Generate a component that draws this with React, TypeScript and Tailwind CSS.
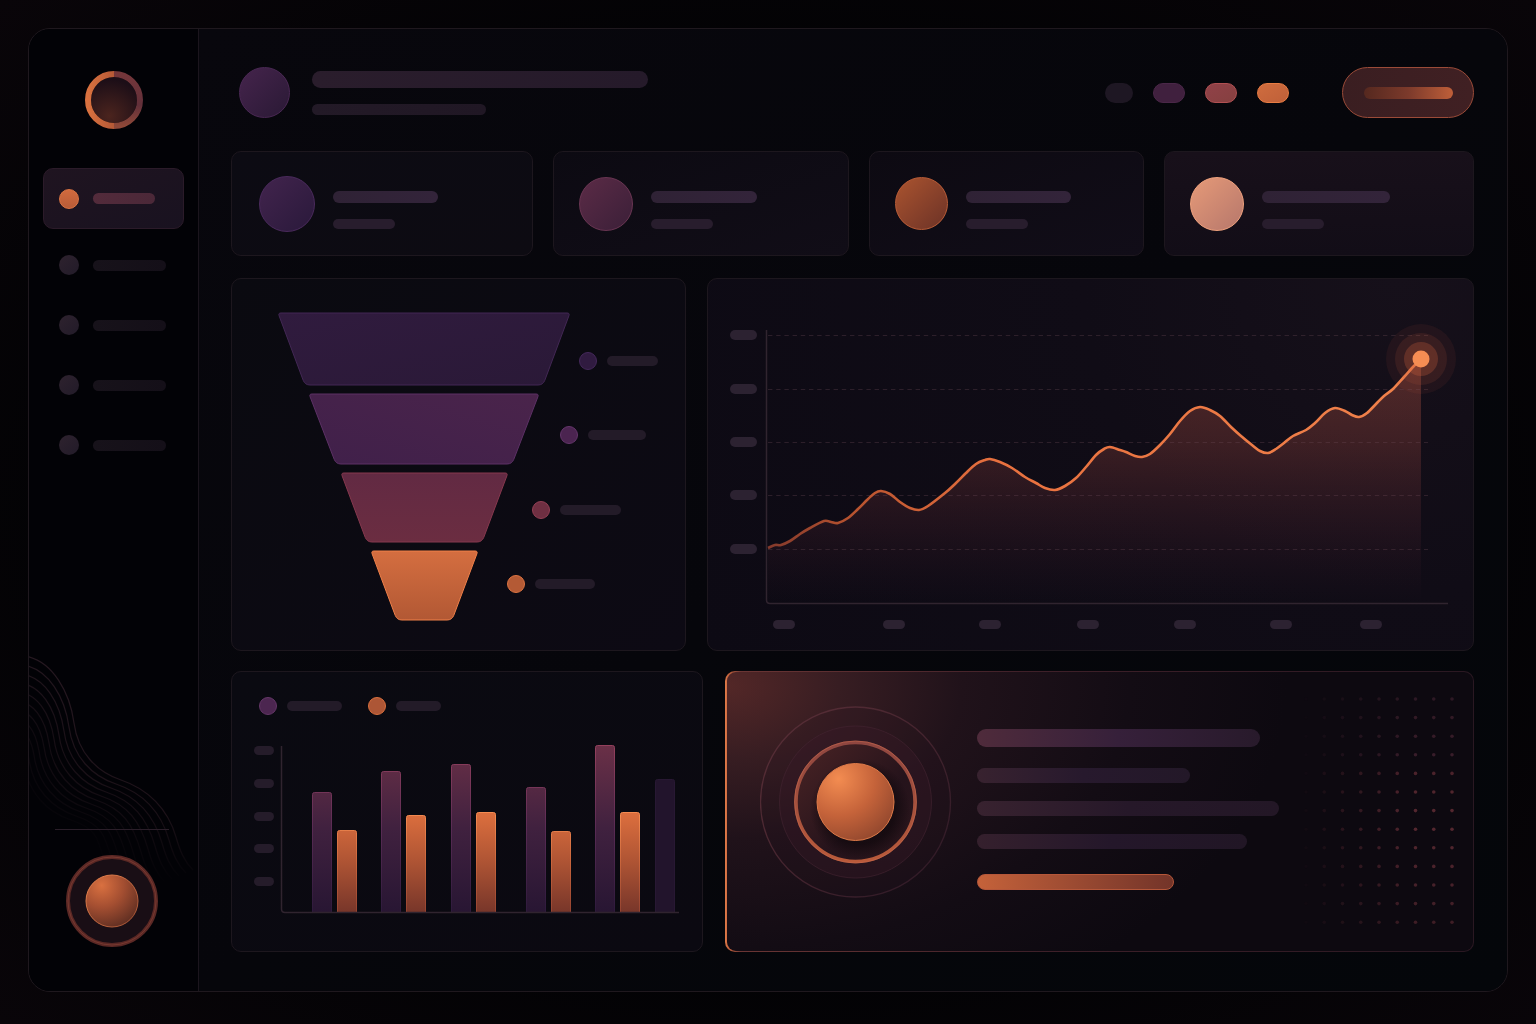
import React from "react";

type Point = [number, number];

/* ---------- helpers ---------- */

function smoothPath(points: Point[]): string {
  let d = `M${points[0][0]} ${points[0][1]}`;
  for (let i = 0; i < points.length - 1; i++) {
    const p0 = points[i - 1] ?? points[i];
    const p1 = points[i];
    const p2 = points[i + 1];
    const p3 = points[i + 2] ?? p2;
    const c1 = [p1[0] + (p2[0] - p0[0]) / 6, p1[1] + (p2[1] - p0[1]) / 6];
    const c2 = [p2[0] - (p3[0] - p1[0]) / 6, p2[1] - (p3[1] - p1[1]) / 6];
    d += ` C${c1[0].toFixed(1)} ${c1[1].toFixed(1)} ${c2[0].toFixed(1)} ${c2[1].toFixed(1)} ${p2[0]} ${p2[1]}`;
  }
  return d;
}

function roundedPolygon(points: Point[], radii: number[]): string {
  const n = points.length;
  const toward = (a: Point, b: Point, r: number): Point => {
    const len = Math.hypot(b[0] - a[0], b[1] - a[1]);
    return [a[0] + ((b[0] - a[0]) * r) / len, a[1] + ((b[1] - a[1]) * r) / len];
  };
  let d = "";
  for (let i = 0; i < n; i++) {
    const p = points[i];
    const a = toward(p, points[(i + n - 1) % n], radii[i]);
    const b = toward(p, points[(i + 1) % n], radii[i]);
    d += `${i ? "L" : "M"}${a[0].toFixed(1)} ${a[1].toFixed(1)} Q${p[0]} ${p[1]} ${b[0].toFixed(1)} ${b[1].toFixed(1)} `;
  }
  return d + "Z";
}

/* ---------- sidebar ---------- */

function Logo() {
  return (
    <svg className="size-[58px]" viewBox="0 0 58 58" role="img" aria-label="Logo">
      <defs>
        <radialGradient id="logoCore" cx="0.4" cy="0.85" r="0.8">
          <stop offset="0" stopColor="#4b241e" />
          <stop offset="1" stopColor="#1c0e17" />
        </radialGradient>
        <linearGradient id="logoLeft" x1="0" y1="0" x2="1" y2="0">
          <stop offset="0" stopColor="#d9713f" />
          <stop offset="1" stopColor="#b55936" />
        </linearGradient>
        <linearGradient id="logoRight" x1="0" y1="0" x2="0" y2="1">
          <stop offset="0" stopColor="#74363a" />
          <stop offset="0.6" stopColor="#62303a" />
          <stop offset="1" stopColor="#8e4838" />
        </linearGradient>
      </defs>
      <circle cx="29" cy="29" r="23" fill="url(#logoCore)" />
      <path d="M29 3a26 26 0 0 1 0 52" fill="none" stroke="url(#logoRight)" strokeWidth="6" />
      <path d="M29 3a26 26 0 0 0 0 52" fill="none" stroke="url(#logoLeft)" strokeWidth="6" />
    </svg>
  );
}

function NavItem({ active = false, label }: { active?: boolean; label: string }) {
  return (
    <button
      type="button"
      aria-label={label}
      aria-current={active ? "page" : undefined}
      className={
        active
          ? "mb-1.5 flex h-[61px] w-full items-center gap-3.5 rounded-[10px] border border-[#2b1b29] bg-linear-to-br from-[#1f1420] to-[#191220] pl-[15px]"
          : "flex h-[60px] w-full items-center gap-3.5 rounded-[10px] border border-transparent pl-[15px]"
      }
    >
      <span
        className={
          active
            ? "size-5 rounded-full border border-[#dc7442] bg-linear-to-b from-[#d16a3e] to-[#b95c38]"
            : "size-5 rounded-full bg-linear-to-br from-[#2e222e] to-[#221b29]"
        }
      />
      <span
        className={
          active
            ? "h-[11px] w-[62px] rounded-full bg-linear-to-r from-[#532b3b] to-[#4b2838]"
            : "h-[11px] w-[73px] rounded-full bg-linear-to-r from-[#17121a] to-[#140f18]"
        }
      />
    </button>
  );
}

/* Each contour is a chain of four curves whose joints share a tangent. */
const waves = Array.from({ length: 11 }, (_, i) => {
  const a: Point = [45 - i * 5, 72 + i * 4];
  const b: Point = [92 - i * 5, 129 + i * 4];
  const c: Point = [147 - i * 7, 186 + i * 3];
  return [
    `M${-4 - i * 2} ${5 + i * 9}`,
    `C${24 - i * 4} ${10 + i * 8} ${41 - i * 5} ${42 + i * 5} ${a[0]} ${a[1]}`,
    `C${a[0] + 4} ${a[1] + 30} ${b[0] - 24} ${b[1] - 8} ${b[0]} ${b[1]}`,
    `C${b[0] + 27} ${b[1] + 9} ${c[0] - 8} ${c[1] - 28} ${c[0]} ${c[1]}`,
    `C${c[0] + 4} ${c[1] + 14} ${c[0] + 8} ${c[1] + 24} ${c[0] + 17} ${c[1] + 33}`,
  ].join(" ");
});

function Waves() {
  return (
    <svg className="absolute bottom-[90px] left-0 h-[250px] w-[169px]" viewBox="0 0 169 250" aria-hidden="true">
      <defs>
        <linearGradient id="waveFade" x1="0" y1="0" x2="0" y2="232" gradientUnits="userSpaceOnUse">
          <stop offset="0" stopColor="#33202a" />
          <stop offset="0.7" stopColor="#26171f" />
          <stop offset="1" stopColor="#26171f" stopOpacity="0" />
        </linearGradient>
      </defs>
      {waves.map((d, i) => (
        <path key={i} d={d} fill="none" stroke="url(#waveFade)" strokeWidth="1.2" opacity={0.75 - i * 0.062} />
      ))}
    </svg>
  );
}

function ProfileOrb() {
  return (
    <svg className="size-[92px]" viewBox="0 0 92 92" aria-hidden="true">
      <defs>
        <radialGradient id="profileCore" cx="0.3" cy="0.2" r="0.95">
          <stop offset="0" stopColor="#d97040" />
          <stop offset="0.45" stopColor="#a34e31" />
          <stop offset="1" stopColor="#52281f" />
        </radialGradient>
        <linearGradient id="profileRim" x1="0" y1="0" x2="1" y2="1">
          <stop offset="0" stopColor="#ec8650" />
          <stop offset="1" stopColor="#a04f32" />
        </linearGradient>
      </defs>
      <circle cx="46" cy="46" r="44" fill="#190e15" stroke="#5a2825" strokeWidth="4" />
      <circle cx="46" cy="46" r="44" fill="none" stroke="#77382f" strokeWidth="1" />
      <circle cx="46" cy="46" r="26" fill="url(#profileCore)" stroke="url(#profileRim)" />
    </svg>
  );
}

function Sidebar() {
  return (
    <aside className="relative flex w-[170px] shrink-0 flex-col border-r border-[#1b151d] bg-[#020206] pt-[42px] pb-11">
      <Waves />
      <div className="flex justify-center">
        <Logo />
      </div>
      <nav aria-label="Main" className="mx-3.5 mt-[39px] flex flex-col">
        <NavItem active label="Overview" />
        <NavItem label="Section 2" />
        <NavItem label="Section 3" />
        <NavItem label="Section 4" />
        <NavItem label="Section 5" />
      </nav>
      <div className="relative mt-auto flex flex-col items-center pr-1">
        <div className="h-px w-[114px] bg-[#2a1e29]" />
        <button type="button" aria-label="Profile" className="mt-[25px] rounded-full">
          <ProfileOrb />
        </button>
      </div>
    </aside>
  );
}

/* ---------- header ---------- */

function Header() {
  return (
    <header className="flex h-[51px] items-center pl-2">
      <span className="size-[51px] shrink-0 rounded-full border border-[#4b2955] bg-linear-to-br from-[#45244c] to-[#2a1935]" />
      <div className="ml-[22px] flex flex-1 flex-col gap-4">
        <span className="h-[17px] w-[336px] rounded-full bg-linear-to-r from-[#2a1d2c] to-[#251a2a]" />
        <span className="h-[11px] w-[174px] rounded-full bg-linear-to-r from-[#231a27] to-[#201724]" />
      </div>
      <div className="flex items-center gap-5">
        <span className="h-5 w-7 rounded-full bg-[#1e1723]" />
        <span className="h-5 w-8 rounded-full border border-[#4a2748] bg-[#40203e]" />
        <span className="h-5 w-8 rounded-full border border-[#b15052] bg-linear-to-br from-[#914148] to-[#854040]" />
        <span className="h-5 w-8 rounded-full border border-[#e87c43] bg-linear-to-br from-[#cf6c3e] to-[#bf6039]" />
      </div>
      <button
        type="button"
        aria-label="Primary action"
        className="ml-[53px] flex h-[51px] w-[132px] items-center justify-center rounded-full border border-[#9b4b38] bg-linear-to-r from-[#3a1e21] to-[#402023]"
      >
        <span className="h-3 w-[89px] rounded-full bg-linear-to-r from-[#55281f] via-[#7c3a2b] to-[#bf5f39]" />
      </button>
    </header>
  );
}

/* ---------- stat cards ---------- */

const stats = [
  { card: "bg-linear-to-br from-[#0c0b13] to-[#0d0b12] pl-[27px]", dot: "size-14 border-[#4a2a5c] from-[#42244d] to-[#2a193b]", bar: "w-[105px]" },
  { card: "bg-linear-to-br from-[#0c0a12] to-[#110d17] pl-[25px]", dot: "size-[54px] border-[#693552] from-[#5b2b46] to-[#3b1f38]", bar: "w-[106px]" },
  { card: "bg-linear-to-br from-[#0d0a12] to-[#110d18] pl-[25px]", dot: "size-[53px] border-[#b95c37] from-[#ab542f] to-[#6c3226]", bar: "w-[105px]" },
  { card: "bg-linear-to-b from-[#18101a] to-[#120d17] pl-[25px]", dot: "size-[54px] border-[#f0a27e] from-[#e69a78] to-[#b6776b]", bar: "w-[128px]" },
];

function StatCards() {
  return (
    <section className="mt-[33px] grid grid-cols-[302fr_296fr_275fr_310fr] gap-5">
      {stats.map((s, i) => (
        <article key={i} className={`flex h-[105px] items-center gap-[18px] rounded-[10px] border border-[#1d171e] ${s.card}`}>
          <span className={`shrink-0 rounded-full border bg-linear-to-br ${s.dot}`} />
          <div className="flex flex-col gap-4 pt-[13px]">
            <span className={`h-3 rounded-full bg-linear-to-r from-[#2f2235] to-[#33243a] ${s.bar}`} />
            <span className="h-2.5 w-[62px] rounded-full bg-[#281d2d]" />
          </div>
        </article>
      ))}
    </section>
  );
}

/* ---------- funnel ---------- */

const funnel = [
  { top: [46, 338], bottom: [73, 311], y: [34, 106], fill: "url(#funnel0)", stroke: "#422754", dot: [356, 82], dotFill: "#301b40", dotStroke: "#44285a", bar: 51 },
  { top: [77, 307], bottom: [104, 280], y: [115, 185], fill: "url(#funnel1)", stroke: "#5c3065", dot: [337, 156], dotFill: "#4b2450", dotStroke: "#63356a", bar: 58 },
  { top: [109, 276], bottom: [135, 250], y: [194, 263], fill: "url(#funnel2)", stroke: "#86384e", dot: [309, 231], dotFill: "#6f2f42", dotStroke: "#933f54", bar: 61 },
  { top: [139, 246], bottom: [165, 220], y: [272, 341], fill: "url(#funnel3)", stroke: "#f08049", dot: [284, 305], dotFill: "#b45a35", dotStroke: "#dc7341", bar: 60 },
];

function FunnelCard() {
  return (
    <article className="rounded-[10px] border border-[#1d171e] bg-linear-to-br from-[#0a0a10] to-[#0d0a14]">
      <svg className="block h-auto w-full" viewBox="0 0 453 371" role="img" aria-label="Funnel chart">
        <defs>
          <linearGradient id="funnel0" x1="0" y1="0" x2="1" y2="1">
            <stop offset="0" stopColor="#301b3e" />
            <stop offset="1" stopColor="#2a1937" />
          </linearGradient>
          <linearGradient id="funnel1" x1="0" y1="1" x2="1" y2="0">
            <stop offset="0" stopColor="#40204a" />
            <stop offset="1" stopColor="#4a244b" />
          </linearGradient>
          <linearGradient id="funnel2" x1="0" y1="0" x2="0" y2="1">
            <stop offset="0" stopColor="#622a43" />
            <stop offset="1" stopColor="#6b2d41" />
          </linearGradient>
          <linearGradient id="funnel3" x1="0" y1="0" x2="0" y2="1">
            <stop offset="0" stopColor="#d46e40" />
            <stop offset="1" stopColor="#b25834" />
          </linearGradient>
        </defs>
        {funnel.map((f, i) => (
          <g key={i}>
            <path
              d={roundedPolygon(
                [
                  [f.top[0], f.y[0]],
                  [f.top[1], f.y[0]],
                  [f.bottom[1], f.y[1]],
                  [f.bottom[0], f.y[1]],
                ],
                [3, 3, 5, 5]
              )}
              fill={f.fill}
              stroke={f.stroke}
            />
            <circle cx={f.dot[0]} cy={f.dot[1]} r="8.5" fill={f.dotFill} stroke={f.dotStroke} />
            <rect x={f.dot[0] + 19} y={f.dot[1] - 5} width={f.bar} height="10" rx="5" fill="#231b28" />
          </g>
        ))}
      </svg>
    </article>
  );
}

/* ---------- trend ---------- */

const trend: Point[] = [
  [60, 269], [67, 266], [73, 266], [82, 262], [92, 255], [102, 249], [116, 242], [123, 243], [130, 244], [140, 239],
  [150, 230], [159, 221], [167, 214], [173, 212], [182, 215], [192, 223], [202, 229], [211, 231], [220, 227], [237, 214],
  [248, 204], [258, 194], [268, 185], [277, 181], [282, 180], [292, 183], [304, 189], [317, 198], [328, 204], [337, 209],
  [347, 211], [357, 207], [368, 199], [378, 188], [388, 176], [396, 170], [402, 168], [412, 171], [418, 173], [427, 177],
  [434, 178], [442, 175], [452, 166], [462, 155], [472, 142], [482, 132], [492, 128], [502, 131], [512, 137], [523, 148],
  [533, 157], [544, 166], [552, 172], [560, 174], [568, 170], [576, 164], [585, 157], [598, 151], [607, 144], [617, 134],
  [627, 129], [637, 132], [644, 136], [651, 138], [659, 134], [668, 125], [676, 117], [685, 110], [696, 98], [704, 89],
  [713, 80],
];
const trendLine = smoothPath(trend);
const gridRows = [56, 110, 163, 216, 270];
const trendTicks = [65, 175, 271, 369, 466, 562, 652];

function TrendCard() {
  return (
    <article className="rounded-[10px] border border-[#1d171e] bg-[radial-gradient(circle_at_90%_0%,#16101a_0%,#100c16_40%,#0d0a14_100%)]">
      <svg className="block h-auto w-full" viewBox="0 0 765 371" role="img" aria-label="Trend chart">
        <defs>
          <linearGradient id="trendStroke" x1="60" y1="0" x2="713" y2="0" gradientUnits="userSpaceOnUse">
            <stop offset="0" stopColor="#83392b" />
            <stop offset="0.13" stopColor="#b8532f" />
            <stop offset="0.35" stopColor="#e8713f" />
            <stop offset="1" stopColor="#f0824b" />
          </linearGradient>
          <linearGradient id="trendFill" x1="0" y1="80" x2="0" y2="324" gradientUnits="userSpaceOnUse">
            <stop offset="0" stopColor="#d0604a" stopOpacity="0.34" />
            <stop offset="0.35" stopColor="#bc5448" stopOpacity="0.25" />
            <stop offset="0.7" stopColor="#8a3a45" stopOpacity="0.13" />
            <stop offset="1" stopColor="#6a2a40" stopOpacity="0" />
          </linearGradient>
        </defs>
        <path d={`${trendLine} V324 H60 Z`} fill="url(#trendFill)" />
        {gridRows.map((y) => (
          <g key={y}>
            <rect x="22" y={y - 5} width="27" height="10" rx="5" fill="#2c2231" />
            <path d={`M60 ${y}.5 H720`} stroke="#6c4a58" strokeOpacity="0.32" strokeDasharray="4.4 3.8" />
          </g>
        ))}
        <path d="M58.5 51 V321 Q58.5 324.5 62 324.5 H740" fill="none" stroke="#30242f" strokeWidth="1.5" />
        {trendTicks.map((x) => (
          <rect key={x} x={x} y="341" width="22" height="9" rx="4.5" fill="#2c2231" />
        ))}
        <path d={trendLine} fill="none" stroke="url(#trendStroke)" strokeWidth="2.6" strokeLinejoin="round" />
        <circle cx="713" cy="80" r="35" fill="#c85d3c" opacity="0.08" />
        <circle cx="713" cy="80" r="26" fill="#c85d3c" opacity="0.13" />
        <circle cx="713" cy="80" r="17" fill="#d8663f" opacity="0.26" />
        <circle cx="713" cy="80" r="8.5" fill="#f68d53" />
      </svg>
    </article>
  );
}

/* ---------- bars ---------- */

const bars = [
  { x: 80, y: 77, tone: "plum" },
  { x: 105, y: 115, tone: "orange" },
  { x: 149, y: 56, tone: "plum" },
  { x: 174, y: 100, tone: "orange" },
  { x: 219, y: 49, tone: "plum" },
  { x: 244, y: 97, tone: "orange" },
  { x: 294, y: 72, tone: "plum" },
  { x: 319, y: 116, tone: "orange" },
  { x: 363, y: 30, tone: "plum" },
  { x: 388, y: 97, tone: "orange" },
  { x: 423, y: 64, tone: "dim" },
];
const barTicks = [35, 68, 101, 133, 166];

function BarsCard() {
  return (
    <article className="rounded-[10px] border border-[#1d171e] bg-linear-to-br from-[#0a0a11] to-[#0b0911]">
      <div className="flex items-center pt-[25px] pl-[27px]">
        <span className="size-[18px] rounded-full border border-[#643667] bg-[#4c2650]" />
        <span className="ml-2.5 h-2.5 w-[55px] rounded-full bg-[#231b28]" />
        <span className="ml-[26px] size-[18px] rounded-full border border-[#d96f3d] bg-[#ad5636]" />
        <span className="ml-2.5 h-2.5 w-[45px] rounded-full bg-[#231b28]" />
      </div>
      <svg className="block h-auto w-full" viewBox="0 0 470 236" role="img" aria-label="Bar chart">
        <defs>
          <linearGradient id="barPlum" x1="0" y1="30" x2="0" y2="197" gradientUnits="userSpaceOnUse">
            <stop offset="0" stopColor="#6a3047" />
            <stop offset="0.5" stopColor="#40213f" />
            <stop offset="1" stopColor="#281633" />
          </linearGradient>
          <linearGradient id="barPlumEdge" x1="0" y1="30" x2="0" y2="197" gradientUnits="userSpaceOnUse">
            <stop offset="0" stopColor="#93405c" />
            <stop offset="0.5" stopColor="#592b54" />
            <stop offset="1" stopColor="#2e1a3c" />
          </linearGradient>
          <linearGradient id="barOrange" x1="0" y1="97" x2="0" y2="197" gradientUnits="userSpaceOnUse">
            <stop offset="0" stopColor="#dd6f3e" />
            <stop offset="0.5" stopColor="#ae5434" />
            <stop offset="1" stopColor="#78362a" />
          </linearGradient>
          <linearGradient id="barOrangeEdge" x1="0" y1="97" x2="0" y2="197" gradientUnits="userSpaceOnUse">
            <stop offset="0" stopColor="#f58c52" />
            <stop offset="0.5" stopColor="#c9653c" />
            <stop offset="1" stopColor="#944331" />
          </linearGradient>
        </defs>
        {barTicks.map((y) => (
          <rect key={y} x="22" y={y - 4} width="20" height="9" rx="4.5" fill="#251c2a" />
        ))}
        {bars.map((b) => (
          <path
            key={b.x}
            d={`M${b.x + 0.5} 197 V${b.y + 2.5} q0 -2 2 -2 h15 q2 0 2 2 V197`}
            fill={b.tone === "plum" ? "url(#barPlum)" : b.tone === "orange" ? "url(#barOrange)" : "#22142c"}
            stroke={b.tone === "plum" ? "url(#barPlumEdge)" : b.tone === "orange" ? "url(#barOrangeEdge)" : "#281833"}
          />
        ))}
        <path d="M49.5 31 V194 Q49.5 197.5 53 197.5 H447" fill="none" stroke="#30242f" strokeWidth="1.5" />
      </svg>
    </article>
  );
}

/* ---------- highlight ---------- */

const dotCols = Array.from({ length: 9 }, (_, i) => i);
const dotRows = Array.from({ length: 13 }, (_, i) => i);

function HighlightCard() {
  return (
    <article className="flex rounded-[10px] bg-[linear-gradient(90deg,#e07a48_0px,#c0603c_4px,#6a3534_16px,#3f2029_40%,#2a1822_100%)] py-px pr-px pl-0.5">
      <div className="flex flex-1 items-start rounded-[9px] bg-[#0d0910] bg-[radial-gradient(ellipse_75%_130%_at_0%_5%,#532727_0%,#371d22_20%,#20121a_42%,#130c14_72%,#0d0910_100%)] pt-[34px] pr-4 pl-[33px]">
        <svg className="size-[192px] shrink-0" viewBox="0 0 192 192" aria-hidden="true">
          <defs>
            <radialGradient id="orbCore" cx="0.28" cy="0.2" r="0.95">
              <stop offset="0" stopColor="#f38c51" />
              <stop offset="0.5" stopColor="#c5633a" />
              <stop offset="1" stopColor="#8a432c" />
            </radialGradient>
            <linearGradient id="orbRing" x1="0" y1="0" x2="0" y2="1">
              <stop offset="0" stopColor="#8f4640" />
              <stop offset="1" stopColor="#b95a3a" />
            </linearGradient>
            <linearGradient id="orbInner" x1="0" y1="0" x2="1" y2="1">
              <stop offset="0" stopColor="#4b2425" />
              <stop offset="0.6" stopColor="#25131b" />
              <stop offset="1" stopColor="#2b161c" />
            </linearGradient>
            <linearGradient id="orbOuter" x1="0" y1="0" x2="1" y2="1">
              <stop offset="0" stopColor="#5c3038" />
              <stop offset="1" stopColor="#2c1825" />
            </linearGradient>
            <radialGradient id="orbShade">
              <stop offset="0.7" stopColor="#0c060a" stopOpacity="0.6" />
              <stop offset="1" stopColor="#0c060a" stopOpacity="0" />
            </radialGradient>
          </defs>
          <circle cx="95.5" cy="96" r="95" fill="#2b1420" fillOpacity="0.18" stroke="url(#orbOuter)" strokeWidth="1.3" />
          <circle cx="95.5" cy="96" r="76" fill="#3a1a28" fillOpacity="0.35" stroke="#452432" strokeOpacity="0.6" />
          <circle cx="95.5" cy="96" r="59.5" fill="url(#orbInner)" stroke="url(#orbRing)" strokeWidth="3.5" />
          <circle cx="95.5" cy="96" r="61" fill="none" stroke="#c3684c" strokeOpacity="0.6" />
          <circle cx="100" cy="103" r="50" fill="url(#orbShade)" />
          <circle cx="95.5" cy="96" r="38.5" fill="url(#orbCore)" stroke="#e07b49" />
        </svg>
        <div className="ml-[25px] flex flex-1 flex-col items-start pt-[23px]">
          <span className="h-[18px] w-[283px] rounded-full bg-linear-to-r from-[#4f2b3b] via-[#36203a] to-[#281a2b]" />
          <span className="mt-[21px] h-[15px] w-[213px] rounded-full bg-linear-to-r from-[#38222f] via-[#27192d] to-[#231828]" />
          <span className="mt-[18px] h-[15px] w-[302px] rounded-full bg-linear-to-r from-[#38222f] via-[#261829] to-[#231726]" />
          <span className="mt-[18px] h-[15px] w-[270px] rounded-full bg-linear-to-r from-[#35202d] via-[#24172a] to-[#211625]" />
          <span className="mt-[25px] h-4 w-[197px] rounded-full border border-[#b5573a] bg-linear-to-r from-[#c5623a] to-[#733429]" />
        </div>
        <svg className="-mt-3 h-[232px] w-[156px] shrink-0" viewBox="0 0 156 232" aria-hidden="true">
          {dotRows.map((r) =>
            dotCols.map((c) => (
              <circle
                key={`${r}-${c}`}
                cx={5 + c * 18.25}
                cy={5 + r * 18.6}
                r="1.8"
                fill={r > 3 ? "#6a3039" : "#532a3a"}
                opacity={(0.06 + (Math.min(c, 6) / 6) * 0.74) * (1 - Math.abs(r - 6.5) / 16)}
              />
            ))
          )}
        </svg>
      </div>
    </article>
  );
}

/* ---------- page ---------- */

export default function App() {
  return (
    <div className="flex min-h-screen bg-[radial-gradient(ellipse_at_center,#010103_0%,#020204_60%,#090509_100%)] px-7 pt-7 pb-8 font-['Inter',sans-serif]">
      <div className="flex flex-1 overflow-hidden rounded-[22px] border border-[#1f181e] bg-[#05060a]">
        <Sidebar />
        <main className="min-w-0 flex-1 bg-linear-to-br from-[#08070d] via-[#06060b] to-[#04060a] pt-[38px] pr-[33px] pb-[39px] pl-8">
          <Header />
          <StatCards />
          <section className="mt-[22px] grid grid-cols-[455fr_767fr] gap-[21px]">
            <FunnelCard />
            <TrendCard />
          </section>
          <section className="mt-5 grid grid-cols-[472fr_749fr] gap-[22px]">
            <BarsCard />
            <HighlightCard />
          </section>
        </main>
      </div>
    </div>
  );
}
